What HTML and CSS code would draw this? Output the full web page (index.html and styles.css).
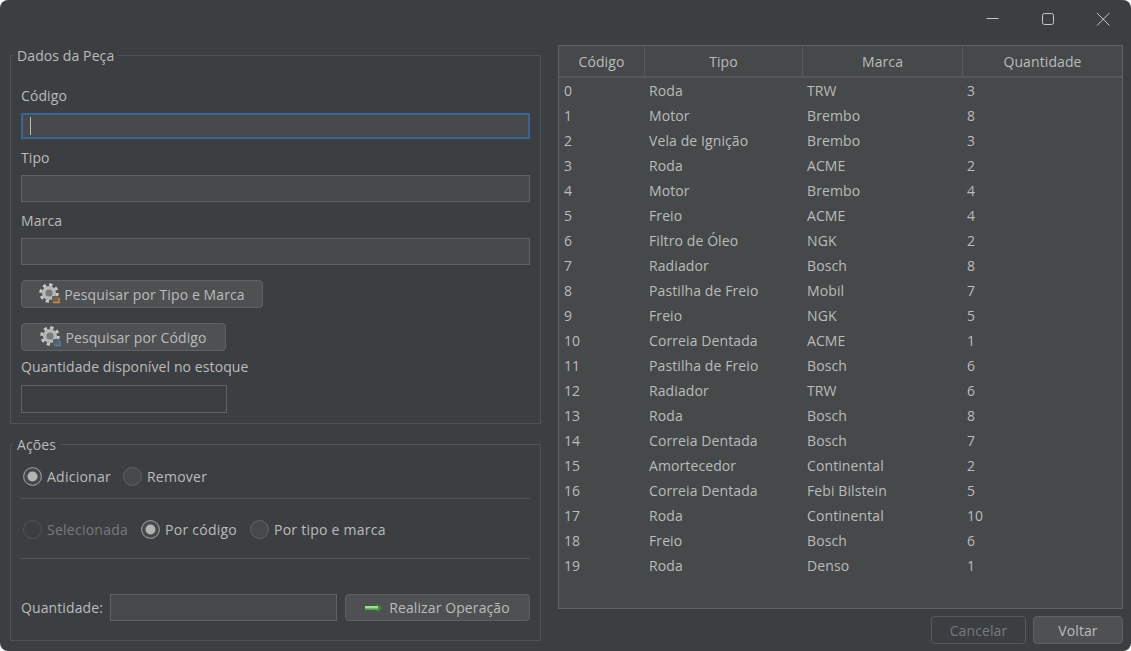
FILE: index.html
```html
<!DOCTYPE html>
<html lang="pt-BR">
<head>
    <meta charset="UTF-8">
    <meta name="viewport" content="width=device-width, initial-scale=1.0">
    <title>Estoque</title>
    <link rel="stylesheet" href="styles.css">
</head>
<body>
    <div class="window">
        <!-- barra de titulo -->
        <div class="titlebar">
            <svg class="win-btn" width="16" height="16" viewBox="0 0 16 16"><path d="M1.5 7.5h12" stroke="#c4c7c9" fill="none"/></svg>
            <svg class="win-btn" width="16" height="16" viewBox="0 0 16 16"><rect x="2.5" y="2.5" width="11" height="11" rx="2" stroke="#c4c7c9" fill="none"/></svg>
            <svg class="win-btn" width="16" height="16" viewBox="0 0 16 16"><path d="M2 2l12.5 12.5M14.5 2L2 14.5" stroke="#c4c7c9" fill="none"/></svg>
        </div>
        <div class="content">
            <div class="left">
                <fieldset class="group dados">
                    <legend>Dados da Peça</legend>
                    <label class="lbl first">Código</label>
                    <div class="input focus"><span class="caret"></span></div>
                    <label class="lbl">Tipo</label>
                    <div class="input"></div>
                    <label class="lbl">Marca</label>
                    <div class="input"></div>
                    <button class="btn search-a">
                        <svg width="22" height="22" viewBox="0 0 22 22"><use href="#gear"/><rect x="13" y="13" width="6" height="6" fill="#6b6152"/><path d="M14 19.5h6v-5" stroke="#d08a3c" stroke-width="1.5" fill="none"/></svg>
                        Pesquisar por Tipo e Marca
                    </button>
                    <button class="btn search-b">
                        <svg width="22" height="22" viewBox="0 0 22 22"><use href="#gear"/><rect x="13" y="13" width="6" height="6" fill="#5a6068"/><path d="M14 19.5h6v-5" stroke="#4a7fc0" stroke-width="1.5" fill="none"/></svg>
                        Pesquisar por Código
                    </button>
                    <label class="lbl stock-lbl">Quantidade disponível no estoque</label>
                    <div class="input empty"></div>
                </fieldset>

                <fieldset class="group acoes">
                    <legend>Ações</legend>
                    <div class="radios r1">
                        <label class="radio"><span class="dot on"></span>Adicionar</label>
                        <label class="radio"><span class="dot"></span>Remover</label>
                    </div>
                    <hr>
                    <div class="radios r2">
                        <label class="radio off"><span class="dot"></span>Selecionada</label>
                        <label class="radio"><span class="dot on"></span>Por código</label>
                        <label class="radio"><span class="dot"></span>Por tipo e marca</label>
                    </div>
                    <hr>
                    <div class="oper">
                        <label class="lbl-q">Quantidade:</label>
                        <div class="input q"></div>
                        <button class="btn run">
                            <svg width="18" height="10" viewBox="0 0 18 10"><path d="M0 3h12V0.5L17 5l-5 4.5V7H0z" fill="#3f8a3f"/><path d="M0 3h13v2H0z" fill="#9fe08f"/><path d="M0 5h13v1.5H0z" fill="#62b85c"/></svg>
                            Realizar Operação
                        </button>
                    </div>
                </fieldset>
            </div>

            <div class="right">
                <div class="table-box">
                    <table>
                        <colgroup><col class="c1"><col class="c2"><col class="c3"><col></colgroup>
                        <thead>
                            <tr><th>Código</th><th>Tipo</th><th>Marca</th><th>Quantidade</th></tr>
                        </thead>
                        <tbody>
                            <tr><td>0</td><td>Roda</td><td>TRW</td><td>3</td></tr>
                            <tr><td>1</td><td>Motor</td><td>Brembo</td><td>8</td></tr>
                            <tr><td>2</td><td>Vela de Ignição</td><td>Brembo</td><td>3</td></tr>
                            <tr><td>3</td><td>Roda</td><td>ACME</td><td>2</td></tr>
                            <tr><td>4</td><td>Motor</td><td>Brembo</td><td>4</td></tr>
                            <tr><td>5</td><td>Freio</td><td>ACME</td><td>4</td></tr>
                            <tr><td>6</td><td>Filtro de Óleo</td><td>NGK</td><td>2</td></tr>
                            <tr><td>7</td><td>Radiador</td><td>Bosch</td><td>8</td></tr>
                            <tr><td>8</td><td>Pastilha de Freio</td><td>Mobil</td><td>7</td></tr>
                            <tr><td>9</td><td>Freio</td><td>NGK</td><td>5</td></tr>
                            <tr><td>10</td><td>Correia Dentada</td><td>ACME</td><td>1</td></tr>
                            <tr><td>11</td><td>Pastilha de Freio</td><td>Bosch</td><td>6</td></tr>
                            <tr><td>12</td><td>Radiador</td><td>TRW</td><td>6</td></tr>
                            <tr><td>13</td><td>Roda</td><td>Bosch</td><td>8</td></tr>
                            <tr><td>14</td><td>Correia Dentada</td><td>Bosch</td><td>7</td></tr>
                            <tr><td>15</td><td>Amortecedor</td><td>Continental</td><td>2</td></tr>
                            <tr><td>16</td><td>Correia Dentada</td><td>Febi Bilstein</td><td>5</td></tr>
                            <tr><td>17</td><td>Roda</td><td>Continental</td><td>10</td></tr>
                            <tr><td>18</td><td>Freio</td><td>Bosch</td><td>6</td></tr>
                            <tr><td>19</td><td>Roda</td><td>Denso</td><td>1</td></tr>
                        </tbody>
                    </table>
                </div>
                <div class="actions">
                    <button class="btn cancel" disabled>Cancelar</button>
                    <button class="btn back">Voltar</button>
                </div>
            </div>
        </div>
    </div>

    <!-- engrenagem usada nos botoes de pesquisa -->
    <svg width="0" height="0" class="defs">
        <defs>
            <g id="gear">
                <circle cx="10" cy="10" r="8.2" fill="none" stroke="#c8c8c8" stroke-width="3" stroke-dasharray="3.2 3.24"/>
                <circle cx="10" cy="10" r="7" fill="#b8b8b8"/>
                <circle cx="10" cy="10" r="3.6" fill="#77797a"/>
            </g>
        </defs>
    </svg>
</body>
</html>
```

FILE: styles.css
```css
* {
    margin: 0;
    padding: 0;
    box-sizing: border-box;
}
html, body {
    width: 1131px;
    height: 651px;
    overflow: hidden;
    background: #fff;
}
body {
    font-family: "Open Sans", "Noto Sans", sans-serif;
    font-size: 14px;
    letter-spacing: .1px;
    color: #bbbbbb;
}
.window {
    width: 1131px;
    height: 651px;
    border-radius: 8px;
    overflow: hidden;
    background: #3c3f41;
    display: flex;
    flex-direction: column;
}
.titlebar {
    height: 38px;
    flex: none;
    display: flex;
    justify-content: flex-end;
    align-items: flex-start;
    gap: 39px;
    padding: 11px 20px 0 0;
}
.content {
    flex: 1;
    display: flex;
    padding: 6px 8px 0 10px;
    gap: 17px;
}
.left {
    width: 531px;
    flex: none;
}
.right {
    width: 565px;
    flex: none;
    padding-top: 1px;
}
.defs {
    position: absolute;
}

/* grupos */
.group {
    border: 1px solid #505354;
    padding: 0 10px;
    min-width: 0;
}
legend {
    margin-left: -8px;
    padding: 2px 4px 0;
    line-height: 20px;
}
.dados {
    height: 380px;
}
.acoes {
    height: 208px;
    margin-top: 9px;
}

.lbl {
    display: block;
    line-height: 20px;
    margin: 9px 0 7px;
}
.lbl.first {
    margin-top: 20px;
}
.input {
    height: 27px;
    border: 1px solid #5e6264;
    background: #45494a;
}
.input.focus {
    height: 26px;
    border: 2px solid #3b6595;
    padding: 2px 7px;
}
.caret {
    display: block;
    width: 1px;
    height: 18px;
    background: #bbbbbb;
}
.input.empty {
    width: 206px;
    height: 28px;
    margin-top: -1px;
    background: #3c3f41;
}

.btn {
    display: flex;
    align-items: center;
    justify-content: center;
    font: inherit;
    letter-spacing: inherit;
    color: #bbbbbb;
    background: #4e5052;
    border: 1px solid #5e6264;
    border-radius: 4px;
    height: 28px;
}
.search-a {
    width: 242px;
    margin-top: 15px;
    gap: 3px;
}
.search-b {
    width: 205px;
    margin-top: 15px;
    gap: 3px;
}
.stock-lbl {
    margin: 6px 0 9px;
}

/* radios */
.radios {
    display: flex;
    gap: 13px;
    padding-left: 2px;
    letter-spacing: .25px;
}
.r1 {
    height: 43px;
    gap: 12px;
    padding-bottom: 1px;
    align-items: center;
}
.r2 {
    height: 59px;
    padding-top: 1px;
    align-items: center;
}
.radio {
    display: flex;
    align-items: center;
    gap: 5px;
}
.radio.off {
    color: #777a7c;
}
.dot {
    width: 19px;
    height: 19px;
    border-radius: 50%;
    border: 1px solid #5e6264;
    background: #45494a;
}
.radio.off .dot {
    background: #3c3f41;
    border-color: #505354;
}
.dot.on {
    border: 1px solid #8c8f91;
    background: #b4b4b4;
    box-shadow: inset 0 0 0 3.5px #45494a;
}
hr {
    border: 0;
    height: 1px;
    background: #505354;
}
.oper {
    display: flex;
    align-items: center;
    margin-top: 35px;
}
.lbl-q {
    width: 89px;
}
.input.q {
    width: 227px;
}
.run {
    width: 185px;
    height: 27px;
    margin-left: 8px;
    gap: 6px;
}

/* tabela */
.table-box {
    height: 564px;
    border: 1px solid #5e6264;
    background: #45494a;
}
table {
    width: 100%;
    border-collapse: separate;
    border-spacing: 0;
    table-layout: fixed;
}
.c1 { width: 85px; }
.c2 { width: 158px; }
.c3 { width: 160px; }
th {
    height: 32px;
    font-weight: 400;
    border-left: 1px solid #55595b;
    border-bottom: 2px solid #55595b;
}
th:first-child {
    border-left: 0;
}
td {
    height: 25px;
    padding-left: 5px;
}
.actions {
    display: flex;
    justify-content: flex-end;
    gap: 7px;
    margin-top: 7px;
}
.cancel {
    width: 95px;
    color: #777a7c;
    background: #3c3f41;
    border-color: #585b5d;
}
.back {
    width: 90px;
}
```
